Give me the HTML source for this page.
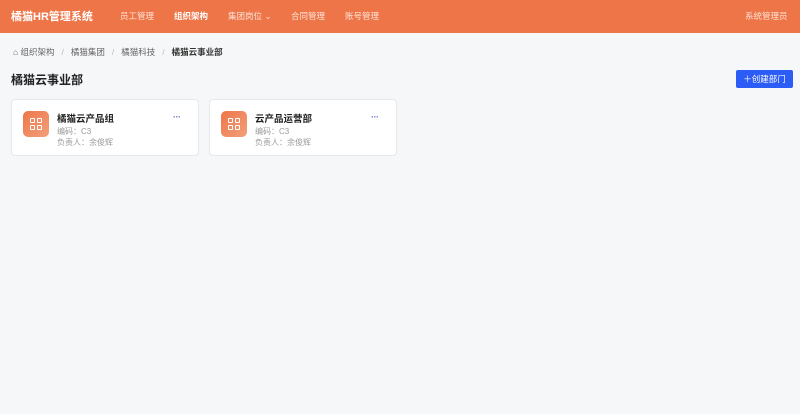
<!DOCTYPE html>
<html><head><meta charset="utf-8"><style>
*{margin:0;padding:0;box-sizing:border-box}
body{width:800px;height:414px;background:#f6f7f9;font-family:"Liberation Sans","Noto Sans CJK SC",sans-serif;position:relative;overflow:hidden}
.hd{position:absolute;left:0;top:0;width:800px;height:33px;background:#ee7548;color:#fff}
.hd span{position:absolute;top:10px;font-size:8.5px;color:#fde3d6}
.logo{left:11px!important;top:8px!important;font-size:11px!important;font-weight:bold;color:#fff!important}
.bc{position:absolute;top:46px;left:13px;font-size:8.5px;color:#666}
.bc i{font-style:normal;color:#bbb;margin:0 7px}
.bc b{color:#333}
h1{position:absolute;left:11px;top:71px;font-size:12px;font-weight:bold;color:#222}
.btn{position:absolute;left:736px;top:70px;width:57px;height:18px;background:#2b5cf6;color:#fff;font-size:8.5px;line-height:18px;text-align:center;border-radius:2px}
.card{position:absolute;top:99px;width:188px;height:57px;background:#fff;border:1px solid #e6e8ec;border-radius:4px}
.ic{position:absolute;left:11px;top:11px;width:26px;height:26px;border-radius:5px;background:linear-gradient(135deg,#ee7548,#f2a07c)}
.ic div{position:absolute;width:5px;height:5px;border:1.5px solid #fff;border-radius:1px}
.t{position:absolute;left:45px;top:11px;font-size:9.5px;font-weight:bold;color:#222}
.s{position:absolute;left:45px;font-size:8px;color:#999}
.dots{position:absolute;left:161px;top:12px;font-size:9px;color:#6b7cc6;letter-spacing:-0.5px;font-weight:bold}
</style></head><body>
<div class="hd"><span class="logo">橘猫HR管理系统</span>
<span style="left:120px">员工管理</span><span style="left:174px;color:#fff;font-weight:bold">组织架构</span><span style="left:228px">集团岗位 ⌄</span><span style="left:291px">合同管理</span><span style="left:345px">账号管理</span><span style="left:745px">系统管理员</span></div>
<div class="bc">⌂ 组织架构<i>/</i>橘猫集团<i>/</i>橘猫科技<i>/</i><b>橘猫云事业部</b></div>
<h1>橘猫云事业部</h1>
<div class="btn">＋创建部门</div>
<div class="card" style="left:11px"><div class="ic"><div style="left:7px;top:7px"></div><div style="left:14px;top:7px"></div><div style="left:7px;top:14px"></div><div style="left:14px;top:14px"></div></div><div class="t">橘猫云产品组</div><div class="s" style="top:26px">编码：C3</div><div class="s" style="top:37px">负责人：余俊辉</div><div class="dots">···</div></div>
<div class="card" style="left:209px"><div class="ic"><div style="left:7px;top:7px"></div><div style="left:14px;top:7px"></div><div style="left:7px;top:14px"></div><div style="left:14px;top:14px"></div></div><div class="t">云产品运营部</div><div class="s" style="top:26px">编码：C3</div><div class="s" style="top:37px">负责人：余俊辉</div><div class="dots">···</div></div>
</body></html>
